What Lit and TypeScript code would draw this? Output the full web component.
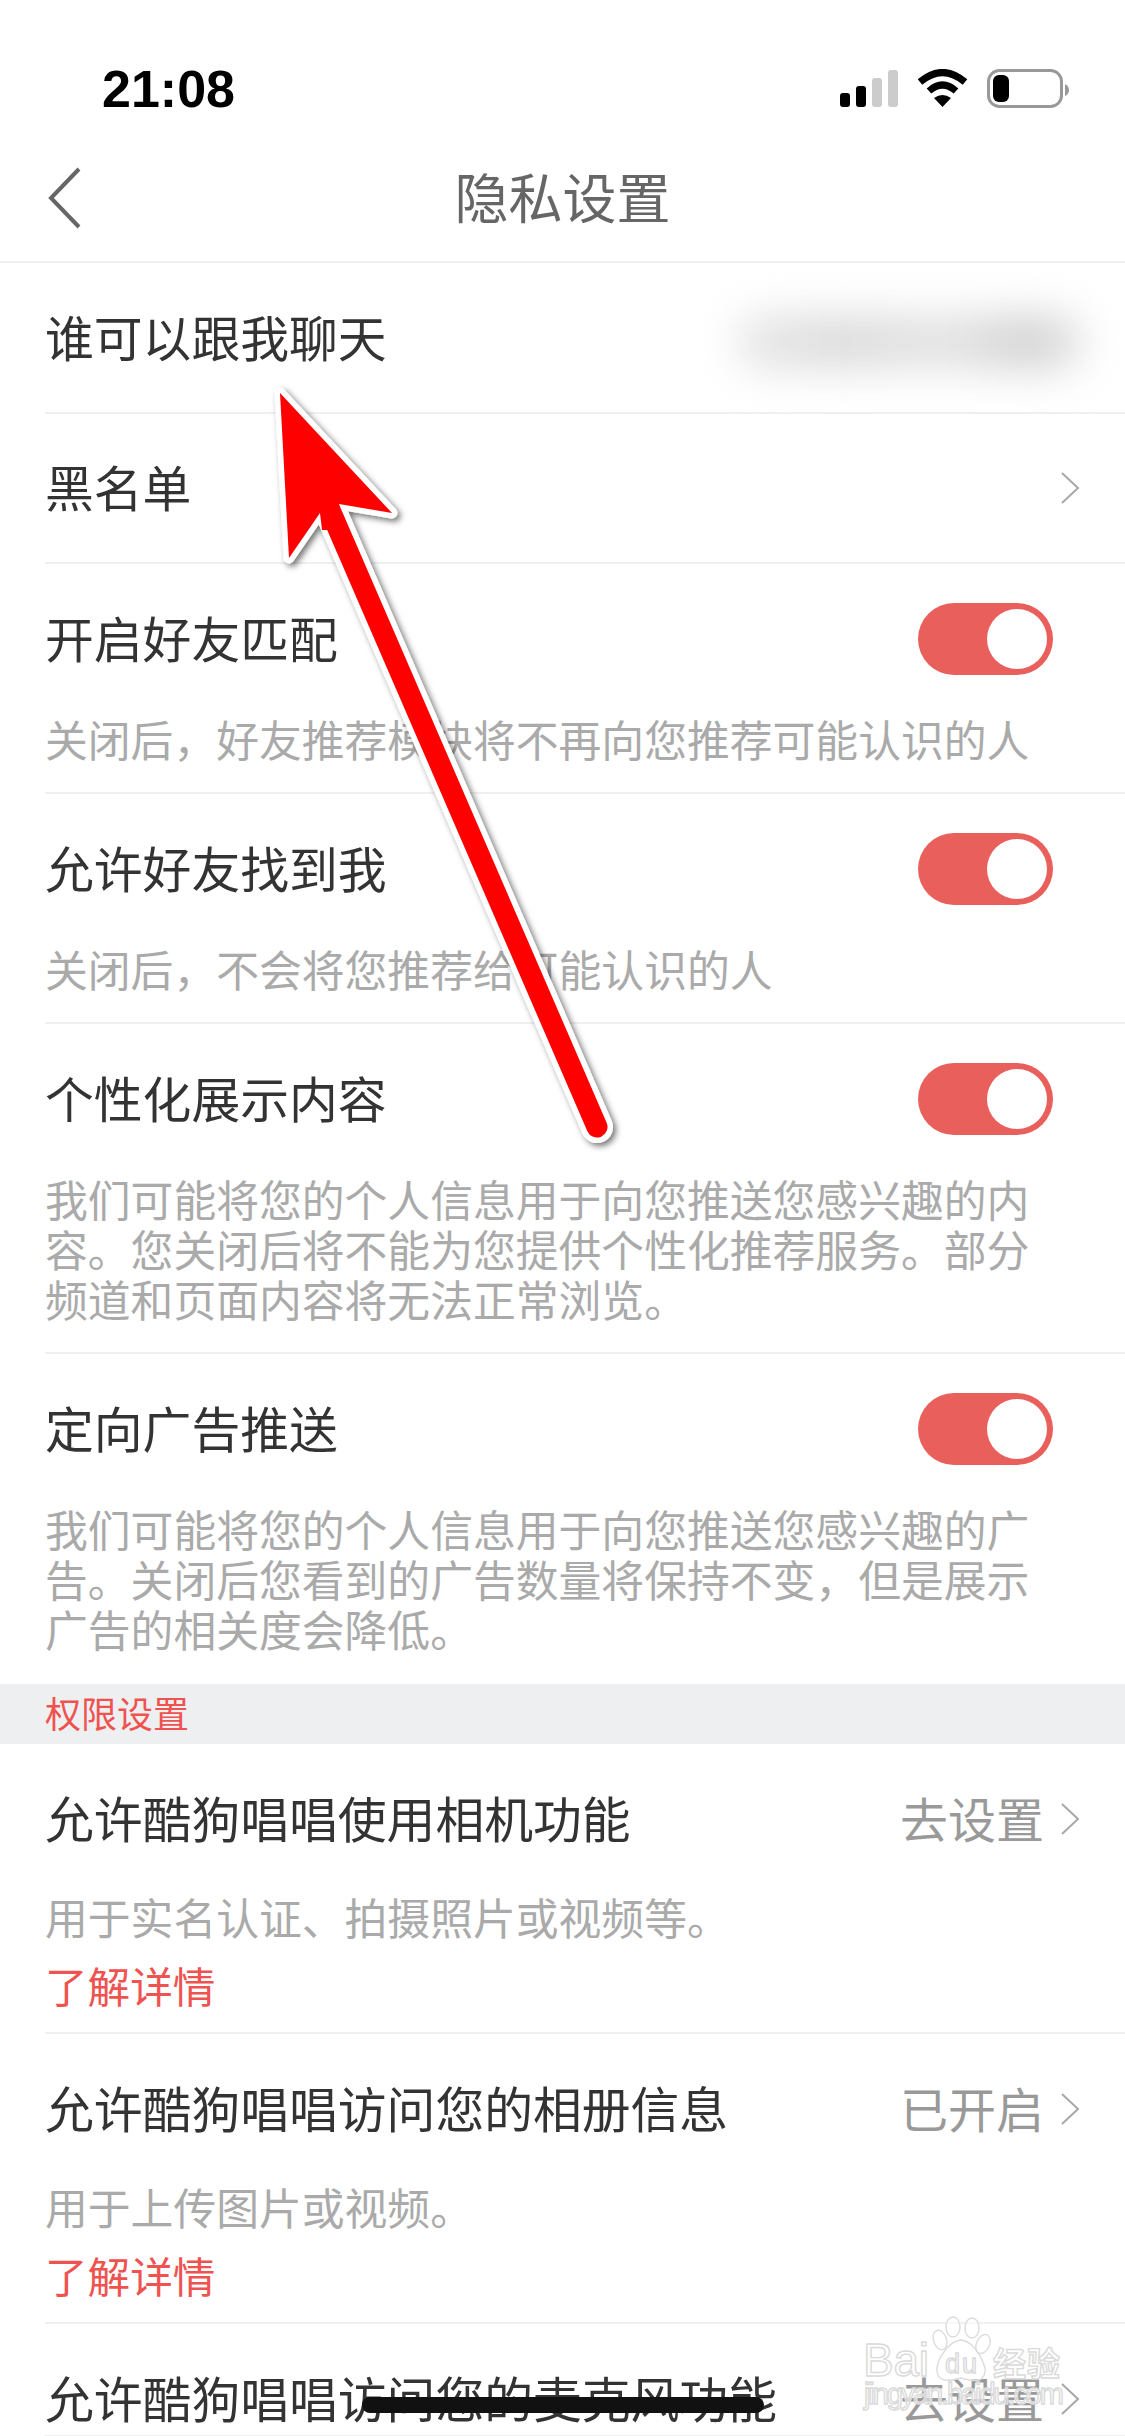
import { LitElement, html, css, svg } from "lit";
import { customElement } from "lit/decorators.js";

type Row = { title: string; desc?: string; toggle?: boolean; link?: boolean; value?: string; chevron?: boolean; blurred?: boolean; last?: boolean };

const top: Row[] = [
  { title: "谁可以跟我聊天", blurred: true },
  { title: "黑名单", chevron: true },
  { title: "开启好友匹配", toggle: true, desc: "关闭后，好友推荐模块将不再向您推荐可能认识的人" },
  { title: "允许好友找到我", toggle: true, desc: "关闭后，不会将您推荐给可能认识的人" },
  { title: "个性化展示内容", toggle: true, desc: "我们可能将您的个人信息用于向您推送您感兴趣的内容。您关闭后将不能为您提供个性化推荐服务。部分频道和页面内容将无法正常浏览。" },
  { title: "定向广告推送", toggle: true, desc: "我们可能将您的个人信息用于向您推送您感兴趣的广告。关闭后您看到的广告数量将保持不变，但是展示广告的相关度会降低。", last: true },
];
const perms: Row[] = [
  { title: "允许酷狗唱唱使用相机功能", value: "去设置", chevron: true, desc: "用于实名认证、拍摄照片或视频等。", link: true },
  { title: "允许酷狗唱唱访问您的相册信息", value: "已开启", chevron: true, desc: "用于上传图片或视频。", link: true },
  { title: "允许酷狗唱唱访问您的麦克风功能", value: "去设置", chevron: true },
];

const chevron = svg`<svg class="chev" width="20" height="34" viewBox="0 0 20 34"><polyline points="2,2 18,17 2,32" fill="none" stroke="#a8a8a8" stroke-width="2"/></svg>`;

@customElement("app-root")
export class AppRoot extends LitElement {
  static styles = css`
    :host { display: block; position: relative; width: 1125px; height: 2436px; overflow: hidden; background: #fff;
      font-family: "Noto Sans CJK SC", "Liberation Sans", sans-serif; color: #333; }
    .status { height: 130px; box-sizing: border-box; padding: 48px 56px 0 102px; display: flex; align-items: center; justify-content: space-between; }
    .time { font: 700 52px/1 "Liberation Sans", sans-serif; color: #000; }
    .status svg { display: block; }
    .nav { height: 133px; margin-bottom: 1px; box-sizing: border-box; border-bottom: 2px solid #efefef; display: grid; grid-template-columns: 1fr auto 1fr; align-items: center; padding: 4px 47px 0; }
    .nav-title { font-size: 54px; line-height: 60px; color: #666; margin-top: -3px; }
    .row { margin-left: 45px; border-bottom: 2px solid #f0f0f0; box-sizing: border-box; }
    .row.last { border-bottom: 0; }
    .row.simple .head { height: 148px; padding: 0 45px 0 0; }
    .head { display: flex; align-items: center; justify-content: space-between; height: 72px; padding: 39px 45px 0 0; }
    .row.tog .head { padding-right: 72px; }
    .title { font-size: 48.8px; line-height: 72px; white-space: nowrap; margin-top: -5px; color: #333; }
    .right { display: flex; align-items: center; gap: 16px; }
    .value { font-size: 48px; line-height: 72px; color: #999; margin-top: -5px; }
    .desc { margin: 38px 0 0 0; width: 995px; font-size: 42.8px; line-height: 50px; color: #aaa; }
    .body { padding-bottom: 29px; }
    .row.last .body { padding-bottom: 31px; }
    .has-link .desc { margin-top: 36px; }
    .link { margin-top: 19px; font-size: 42.6px; line-height: 50px; color: #ef5350; }
    .has-link .body { padding-bottom: 22px; }
    .toggle { width: 135px; height: 72px; border-radius: 36px; background: #e95f5c; display: flex; align-items: center; justify-content: flex-end; padding-right: 6px; box-sizing: border-box; }
    .knob { width: 60px; height: 60px; border-radius: 50%; background: #fff; }
    .blur { width: 350px; height: 56px; margin: 8px -5px 0 0; border-radius: 28px; filter: blur(20px); background: linear-gradient(90deg, #e8e8e8 0%, #dcdcdc 30%, #e4e4e4 60%, #d2d2d2 85%, #e6e6e6 100%); }
    .section { height: 60px; background: #eeeff1; display: flex; align-items: center; padding-left: 45px; font-size: 36px; color: #ef5350; }
    .section span { margin-top: -5px; }
    .arrow, .wm, .home { position: absolute; }
    .arrow { left: 0; top: 0; pointer-events: none; }
    .home { left: 362px; top: 2397px; width: 402px; height: 16px; border-radius: 8px; background: #111; }
    .wm { left: 850px; top: 2300px; }
    .wm text { fill: rgba(255,255,255,.6); stroke: #dadada; stroke-width: 1.4px; }
    .wm .big { font: 400 46px "Liberation Sans", sans-serif; }
    .wm .du { font: 400 27px "Liberation Sans", sans-serif; }
    .wm .cn { font: 700 33px "Noto Sans CJK SC", sans-serif; }
    .wm .url { font: 400 29px "Liberation Sans", sans-serif; }
  `;

  renderRow(r: Row) {
    const simple = !r.desc && !r.last && !r.value;
    const cls = `row ${simple ? "simple" : ""} ${r.toggle ? "tog" : ""} ${r.last ? "last" : ""} ${r.link ? "has-link" : ""}`;
    return html`<div class=${cls}>
      <div class="head">
        <div class="title">${r.title}</div>
        ${r.toggle ? html`<div class="toggle"><div class="knob"></div></div>` : ""}
        ${r.blurred ? html`<div class="blur"></div>` : ""}
        ${r.chevron ? html`<div class="right">${r.value ? html`<span class="value">${r.value}</span>` : ""}${chevron}</div>` : ""}
      </div>
      ${r.desc ? html`<div class="body"><div class="desc">${r.desc}</div>${r.link ? html`<div class="link">了解详情</div>` : ""}</div>` : ""}
    </div>`;
  }

  render() {
    return html`
      <div class="status">
        <div class="time">21:08</div>
        <svg width="229" height="40" viewBox="840 69 229 40">
          <rect x="840" y="93" width="10" height="14" rx="3" fill="#000"/>
          <rect x="856" y="86" width="10" height="21" rx="3" fill="#000"/>
          <rect x="872" y="78" width="10" height="29" rx="3" fill="#ccc"/>
          <rect x="888" y="70" width="10" height="37" rx="3" fill="#ccc"/>
          <path d="M920 82 Q942.5 63 965 82" fill="none" stroke="#000" stroke-width="7"/>
          <path d="M929 91 Q942.5 79 956 91" fill="none" stroke="#000" stroke-width="7"/>
          <path d="M934 98 Q942.5 92 951 98 L942.5 107Z" fill="#000"/>
          <rect x="988.5" y="70.5" width="73" height="36" rx="11" fill="none" stroke="#999" stroke-width="3"/>
          <rect x="993" y="75" width="16" height="27" rx="6" fill="#000"/>
          <path d="M1065 84 Q1069 86 1069 90 Q1069 94 1065 96Z" fill="#999"/>
        </svg>
      </div>
      <div class="nav">
        <svg width="34" height="62" viewBox="0 0 34 62"><polyline points="32,2 4,31 32,60" fill="none" stroke="#666" stroke-width="4"/></svg>
        <div class="nav-title">隐私设置</div>
        <div></div>
      </div>
      ${top.map((r) => this.renderRow(r))}
      <div class="section"><span>权限设置</span></div>
      ${perms.map((r) => this.renderRow(r))}
      <svg class="wm" width="240" height="136" viewBox="850 2300 240 136">
        <g fill="rgba(255,255,255,.5)" stroke="#dcdcdc" stroke-width="1.4">
          <ellipse cx="953" cy="2327" rx="7" ry="10"/>
          <ellipse cx="972" cy="2328" rx="7" ry="10"/>
          <ellipse cx="940" cy="2340" rx="6.5" ry="10" transform="rotate(-20 940 2340)"/>
          <ellipse cx="983" cy="2344" rx="6.5" ry="10" transform="rotate(25 983 2344)"/>
          <path d="M961 2340 C976 2341 987 2368 985 2372 C983 2384 972 2381 961 2378 C950 2381 938 2383 937 2371 C936 2361 948 2341 961 2340Z"/>
        </g>
        <text class="big" x="863" y="2376" textLength="66">Bai</text>
        <text class="du" x="945" y="2373" textLength="32">du</text>
        <text class="cn" x="993" y="2376" textLength="67">经验</text>
        <text class="url" x="864" y="2404" textLength="200">jingyan.baidu.com</text>
      </svg>
      <svg class="arrow" width="1125" height="2436" viewBox="0 0 1125 2436">
        <defs><filter id="sh" x="-20%" y="-20%" width="140%" height="140%"><feDropShadow dx="3" dy="3" stdDeviation="3" flood-color="#000" flood-opacity=".55"/></filter></defs>
        <g filter="url(#sh)">
          <path d="M280 393 L392 513 L339 504 L597 1127 L320 513 L289 558 Z" fill="#fff" stroke="#fff" stroke-width="11" stroke-linejoin="round"/>
          <path d="M330 510 L597 1127" stroke="#fff" stroke-width="32" stroke-linecap="round"/>
        </g>
        <path d="M330 510 L597 1127" stroke="#f00" stroke-width="21" stroke-linecap="round"/>
        <path d="M280 393 L392 513 L339 504 L345 530 L322 530 L320 513 L289 558 Z" fill="#f00"/>
      </svg>
      <div class="home"></div>
    `;
  }
}
